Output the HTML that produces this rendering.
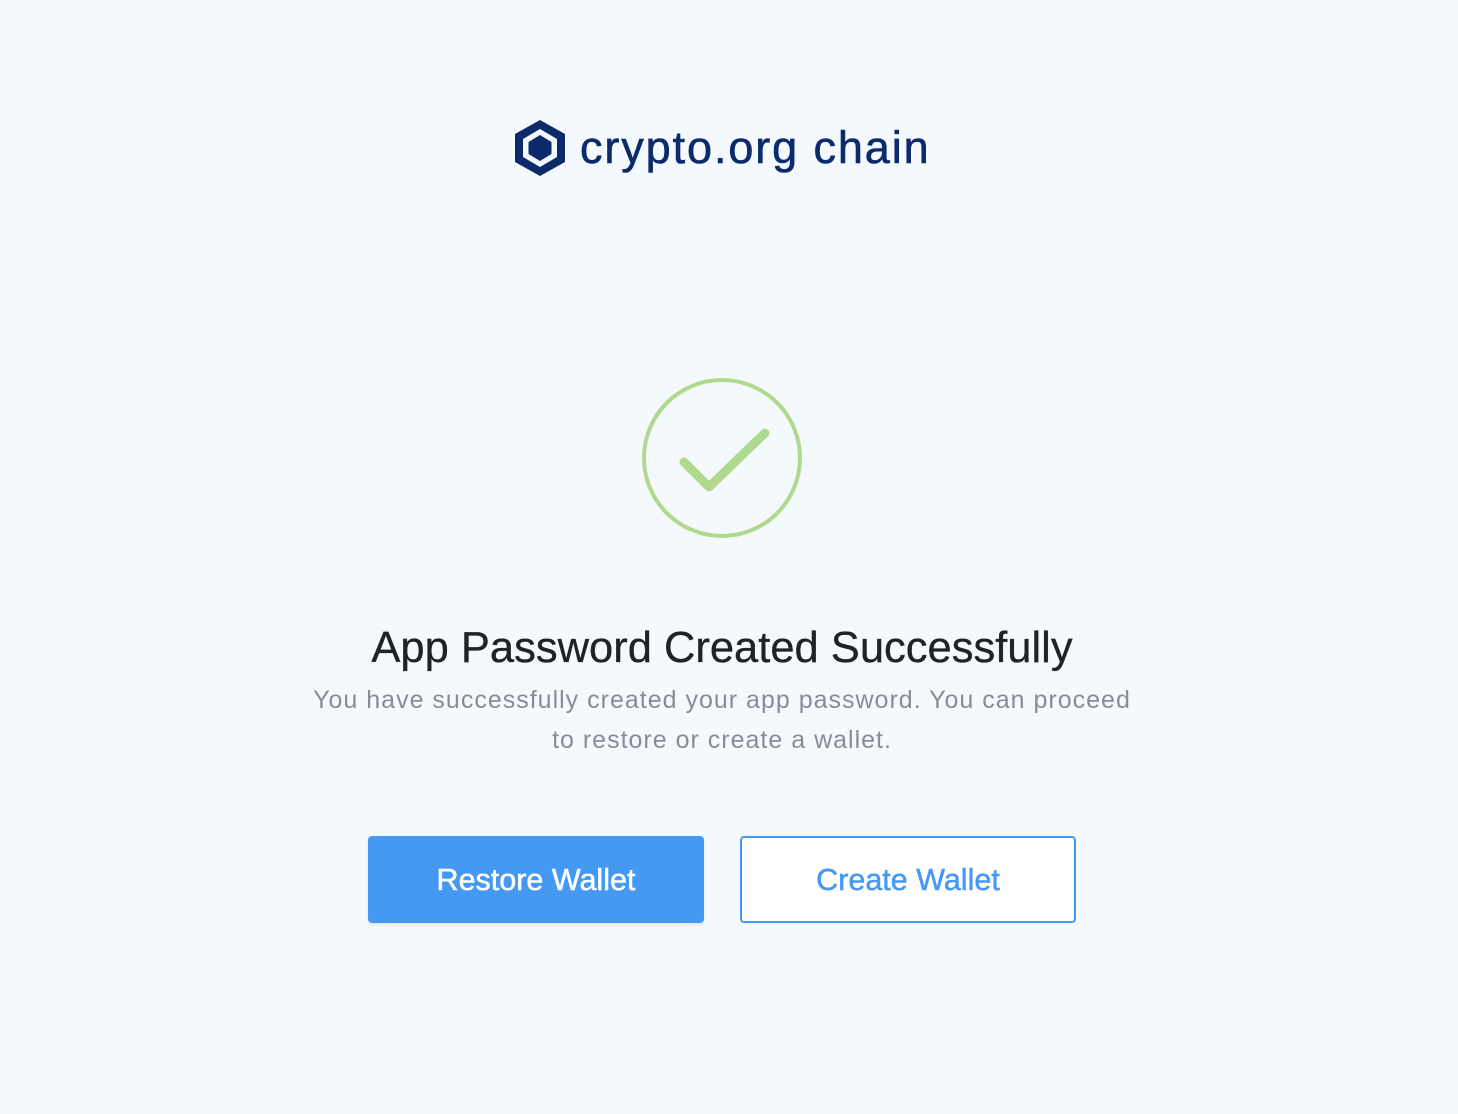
<!DOCTYPE html>
<html><head><meta charset="utf-8"><style>
html,body{margin:0;padding:0;}
body{width:1458px;height:1114px;background:#f4f9fd;font-family:"Liberation Sans",Arial,sans-serif;position:relative;overflow:hidden;}
.logo{position:absolute;left:513px;top:118px;}
.logotext{position:absolute;left:580px;top:118px;font-size:45px;color:#0d2a6b;letter-spacing:1.9px;line-height:60px;-webkit-text-stroke:0.6px #0d2a6b;}
.title{position:absolute;left:0;width:1444px;top:623px;text-align:center;font-size:43.5px;color:#222;line-height:50px;-webkit-text-stroke:0.3px #222;}
.sub{position:absolute;left:0;width:1444px;top:680px;text-align:center;font-size:25px;color:#878c95;line-height:40px;letter-spacing:1px;}
.btn{position:absolute;top:836px;width:336px;height:87px;box-sizing:border-box;border-radius:4px;text-align:center;line-height:89px;font-size:30.5px;}
.b1{left:368px;background:#4599f3;color:#fff;box-shadow:0 2px 3px rgba(0,0,0,0.08);-webkit-text-stroke:0.5px #fff;}
.b2{left:740px;background:#fff;border:2px solid #4599f3;color:#4599f3;line-height:85px;-webkit-text-stroke:0.5px #4599f3;}
</style></head><body>
<svg class="logo" width="54" height="60" viewBox="0 0 54 60">
<polygon points="27,2 52,16 52,44 27,58 2,44 2,16" fill="#0d2a6b"/>
<polygon points="27,11 44,21 44,39 27,49 10,39 10,21" fill="#f4f9fd"/>
<polygon points="27,17 38.5,24 38.5,36 27,43 15.5,36 15.5,24" fill="#0d2a6b"/>
</svg>
<div class="logotext">crypto.org chain</div>
<svg style="position:absolute;left:640px;top:376px" width="164" height="164" viewBox="0 0 164 164">
<circle cx="82" cy="82" r="78" fill="none" stroke="#b1d98d" stroke-width="4"/>
<polyline points="44,86 69,111 125,57" fill="none" stroke="#b1d98d" stroke-width="9" stroke-linecap="round" stroke-linejoin="round"/>
</svg>
<div class="title">App Password Created Successfully</div>
<div class="sub">You have successfully created your app password. You can proceed<br>to restore or create a wallet.</div>
<div class="btn b1">Restore Wallet</div>
<div class="btn b2">Create Wallet</div>
</body></html>
